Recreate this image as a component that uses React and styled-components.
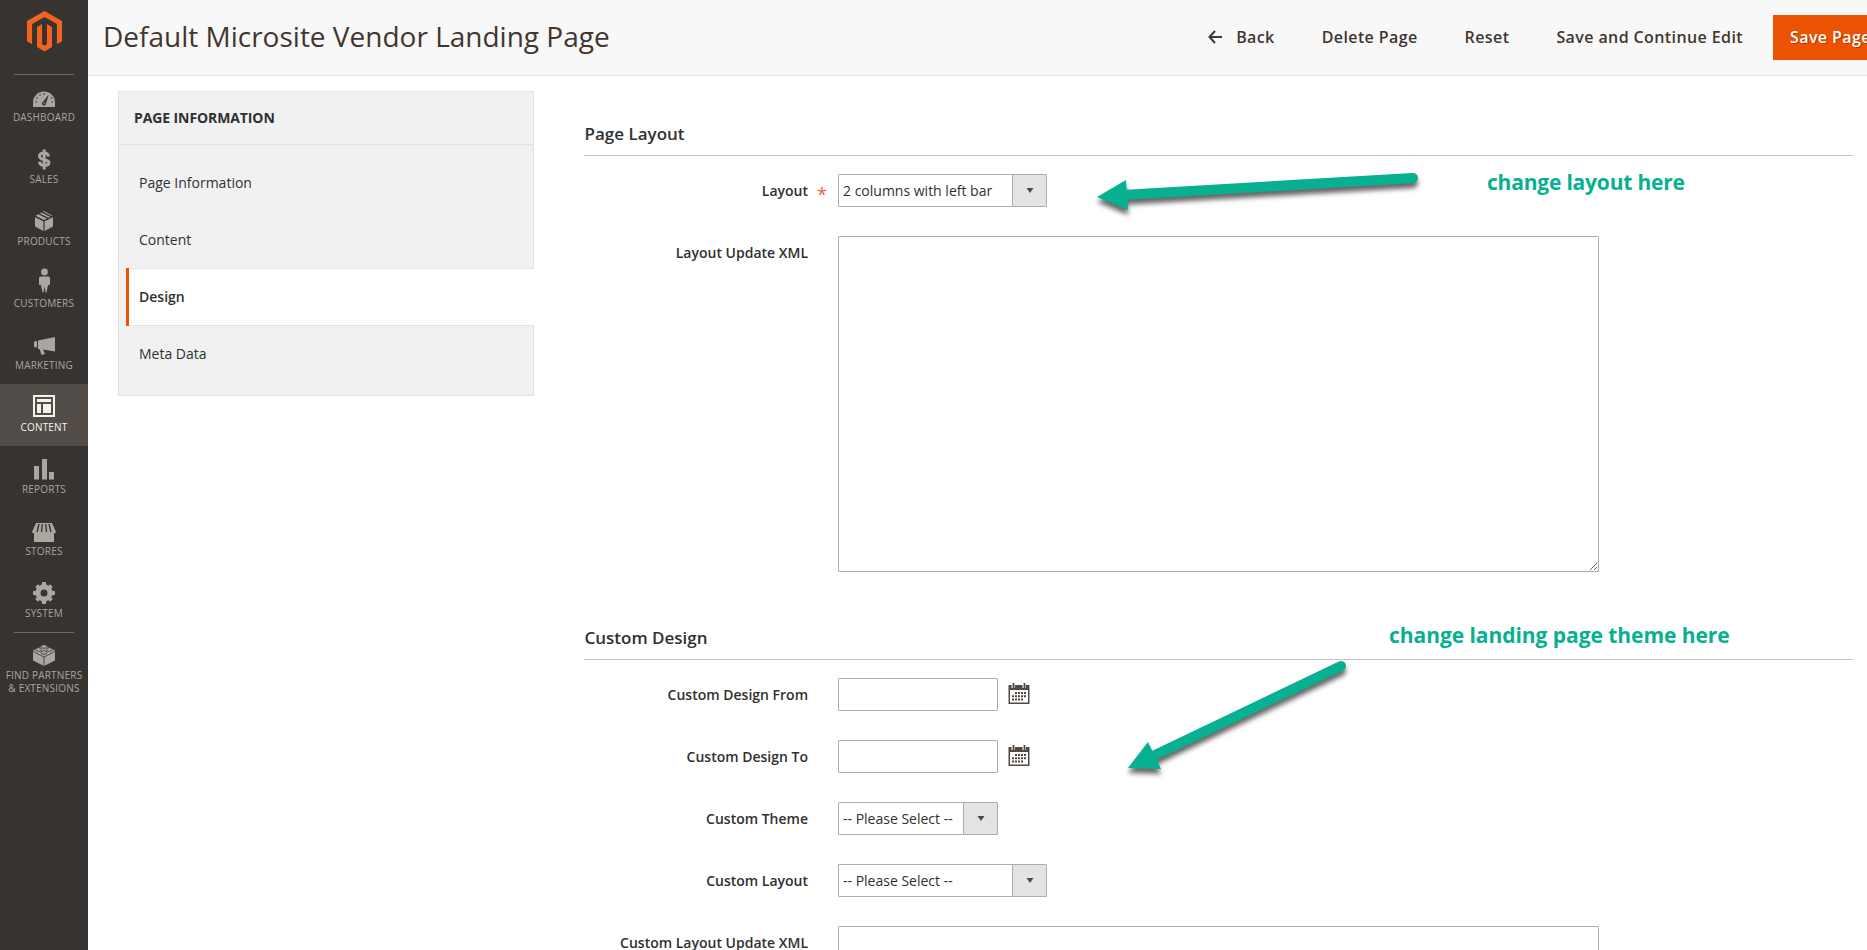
import React from 'react';
import styled, {createGlobalStyle, css} from 'styled-components';

const GlobalStyle = createGlobalStyle`
    * {
        box-sizing: border-box;
    }
    html, body {
        margin: 0;
        height: 100%;
        overflow: hidden;
    }
    body {
        background: #fff;
        color: #303030;
        font-family: 'Open Sans', 'Noto Sans', sans-serif;
        font-size: 14px;
        line-height: 19px;
    }
`

const Page = styled.div`
    position: relative;
    display: flex;
    width: 100%;
    height: 950px;
    overflow: hidden;
`

/* ---- left menu ---- */
const Sider = styled.nav`
    flex: 0 0 88px;
    background: #373330;
`

const Logo = styled.a`
    display: flex;
    justify-content: center;
    height: 74px;
    padding: 11px 0 0 1px;
`

const MenuItem = styled.a`
    display: flex;
    flex-direction: column;
    align-items: center;
    height: ${props => props.$tall ? 78 : 62}px;
    color: ${props => props.$active ? '#f7f3eb' : '#aaa6a0'};
    background: ${props => props.$active ? '#524d49' : 'transparent'};
    font-size: 10px;
    letter-spacing: .2px;
    line-height: 13px;
    text-align: center;
    text-transform: uppercase;
    white-space: nowrap;
    ${props => props.$line && css`
        &::before {
            content: '';
            width: 60px;
            height: 1px;
            margin-bottom: -1px;
            background: #736963;
        }
    `}
    svg {
        flex: none;
        margin: 10px 0 3px;
    }
`

/* ---- header ---- */
const Main = styled.div`
    flex: 1;
    min-width: 0;
`

const Header = styled.header`
    display: flex;
    align-items: center;
    height: 76px;
    padding-left: 15px;
    border-bottom: 1px solid #e3e3e3;
    background: #f8f8f8;
    overflow: hidden;
`

const Title = styled.h1`
    flex: 1;
    margin: 0;
    padding-bottom: 4px;
    color: #41362f;
    font-size: 28px;
    font-weight: 400;
    line-height: 38px;
    white-space: nowrap;
`

const Actions = styled.div`
    display: flex;
    align-items: center;
    height: 45px;
    margin-right: -13px;
`

const ActionButton = styled.button`
    display: flex;
    align-items: center;
    height: 45px;
    margin: 0;
    padding: 0 0 2px;
    margin-right: ${props => props.$gap || 47}px;
    border: 0;
    background: none;
    color: #41362f;
    font-family: inherit;
    font-size: 16px;
    font-weight: 600;
    letter-spacing: 0.4px;
    white-space: nowrap;
    svg {
        margin-right: 14px;
    }
`

const PrimaryButton = styled(ActionButton)`
    width: 107px;
    margin-right: 0;
    padding-left: 17px;
    background: #eb5202;
    color: #fff;
    text-shadow: 1px 1px 0 rgba(0, 0, 0, .25);
`

const Body = styled.div`
    display: flex;
    align-items: flex-start;
    padding: 15px 14px 0 30px;
`

/* ---- tabs ---- */
const Tabs = styled.aside`
    flex: 0 0 416px;
    height: 305px;
    border: 1px solid #e3e3e3;
    background: #f1f1f1;
`

const TabsTitle = styled.div`
    height: 53px;
    padding: 17px 15px;
    border-bottom: 1px solid #e3e3e3;
    font-weight: 700;
    letter-spacing: -.1px;
    line-height: 18px;
    text-transform: uppercase;
`

const TabList = styled.ul`
    margin: 0;
    padding: 10px 0 0 7px;
    list-style: none;
`

const Tab = styled.li`
    position: relative;
    height: 57px;
    padding: 18px 13px;
    ${props => props.$active && css`
        height: 58px;
        margin: -1px -1px 0 0;
        border: solid #e3e3e3;
        border-width: 1px 0;
        background: #fff;
        font-weight: 600;
        &::before {
            content: '';
            position: absolute;
            left: 0;
            top: -1px;
            bottom: -1px;
            width: 3px;
            background: #eb5202;
        }
    `}
`

/* ---- form ---- */
const Form = styled.form`
    flex: 1;
    margin-left: 50px;
`

const Section = styled.section`
    height: 504px;
`

const SectionTitle = styled.h2`
    height: 65px;
    margin: 0 0 18px;
    padding: 31px 0 0 .5px;
    border-bottom: 1px solid #cac3b9;
    font-size: 17px;
    font-weight: 600;
    line-height: 24px;
`

const Field = styled.div`
    display: flex;
    align-items: flex-start;
    min-height: 33px;
    margin-bottom: 29px;
`

const Label = styled.label`
    width: 224px;
    padding-top: 7px;
    font-weight: 600;
    text-align: right;
`

const Mark = styled.span`
    width: 30px;
    height: 30px;
    padding: 11px 0 0 9px;
    color: #eb5e3b;
    font-size: 18px;
`

const Control = styled.div`
    display: flex;
    align-items: center;
    width: ${props => props.$width}px;
    height: 33px;
    border: 1px solid #adadad;
    border-radius: 1px;
    background: #fff;
    white-space: nowrap;
`

const SelectValue = styled.span`
    flex: 1;
    padding: 0 0 1px 4px;
`

const SelectArrow = styled.span`
    display: flex;
    align-items: center;
    justify-content: center;
    width: 34px;
    height: 100%;
    border-left: 1px solid #adadad;
    background: #e3e3e3;
`

const TextArea = styled.textarea`
    display: block;
    width: 761px;
    height: 336px;
    padding: 5px;
    border: 1px solid #adadad;
    border-radius: 1px;
    outline: 0;
    resize: vertical;
`

const CalendarButton = styled.span`
    display: flex;
    margin: 5px 0 0 10px;
`

/* ---- notes drawn over the page ---- */
const Overlay = styled.svg`
    position: absolute;
    left: 0;
    top: 0;
    pointer-events: none;
`

const Note = styled.div`
    position: absolute;
    left: ${props => props.$x}px;
    top: ${props => props.$y}px;
    color: #07b091;
    font-size: 21px;
    font-weight: 700;
    line-height: 30px;
    letter-spacing: ${props => props.$spacing || 0}px;
    white-space: nowrap;
`

const icons = {
    dashboard: (
        <>
            <path d="M0 22V17.500a11 11 0 0 1 22 0V22z" fill="currentColor"/>
            <g fill="#373330">
                <circle cx="3" cy="17" r=".8"/><circle cx="4" cy="13" r=".8"/><circle cx="7" cy="10" r=".8"/>
                <circle cx="11" cy="9" r=".8"/><circle cx="18.500" cy="13" r=".8"/><circle cx="19.300" cy="17" r=".8"/>
                <path d="M15.800 9.500 13 18.500a2 2 0 1 1-3-1.800z"/>
            </g>
            <circle cx="11.300" cy="18" r=".8" fill="currentColor"/>
        </>
    ),
    sales: (
        <path d="M15.600 9.500C15.200 7 13.800 6 11.200 6 8.300 6 6.500 7.200 6.500 9.300c0 4.600 9.400 2.400 9.400 6.300 0 2-1.800 2.900-4.400 2.900-3 0-4.700-1.300-5.100-3.700M11.200 2.500v20"
              fill="none" stroke="currentColor" strokeWidth="3"/>
    ),
    products: (
        <g fill="currentColor">
            <path d="m2 8.200 8.400 4V22L2 17.500zM20 8.200l-8.400 4V22l8.400-4.500z"/>
            <path d="m2.600 6.800 2.700-1.500 8.600 4.300-2.900 1.500zM6.800 4.500l1.700-1 8.800 4.400-1.900.9zM10 2.600l1.200-.6 8.200 4.700-.7.500z"/>
        </g>
    ),
    customers: (
        <g fill="currentColor" transform="translate(0 -1.500)">
            <circle cx="11.500" cy="2.500" r="3.400"/>
            <path d="M7.500 7h8q1.500 0 1.500 2v6q-1 1.500-2 0v1l-1.500 7h-1l-1-6-1 6h-1L8 16v-1q-1 1.500-2 0V9q0-2 1.500-2z"/>
        </g>
    ),
    marketing: (
        <path d="M22 4v14.500l-12-2L12 21l-3.500 1-2-6H5V7.500zM4 8v6.500l-3-.5v-5.500z" fill="currentColor"/>
    ),
    content: (
        <g fill="none" stroke="currentColor">
            <rect x="1" y="1" width="20" height="20" strokeWidth="2"/>
            <path d="M4 5.500h14" strokeWidth="3"/>
            <path d="M6 9v9" strokeWidth="4"/>
            <path d="M14 9v9" strokeWidth="8"/>
        </g>
    ),
    reports: <path d="M1 9h5v13.500H1zM9 2h5v20.500H9zM16 15h5v7.500h-5z" fill="currentColor"/>,
    stores: (
        <g fill="currentColor">
            <path d="M1 13h20v10H1z"/>
            <path d="M3 4h16l4 9q-2.400 3-4.700 0-2.400 3-4.900 0-2.400 3-4.800 0-2.400 3-4.900 0-2.400 3-4.700 0z"/>
            <path d="m6 5-2 8M9.300 5l-.8 8M12.700 5l.8 8M16 5l2 8" fill="none" stroke="#373330" strokeWidth="1.400"/>
        </g>
    ),
    system: (
        <g transform="translate(0 1)">
            <circle cx="11" cy="11" r="6" fill="none" stroke="currentColor" strokeWidth="5"/>
            <path d="m8.300 4 .9-4h3.600l.9 4zM8.300 18l.9 4h3.600l.9-4zM4 8.300l-4 .9v3.600l4 .9zM18 8.300l4 .9v3.600l-4 .9z" fill="currentColor"/>
            <path d="m3.600 3.600 3 3M15.400 15.400l3 3M3.600 18.400l3-3M15.400 6.600l3-3"
                  stroke="currentColor" strokeWidth="4"/>
        </g>
    ),
    partners: (
        <g transform="translate(0 1)">
            <path d="m11 1 11 5.500v10L11 22 0 16.500v-10z" fill="currentColor"/>
            <path d="m0 7.500 11 5.500 11-5.500M11 13v9" fill="none" stroke="#373330" strokeWidth=".8"/>
            <g fill="currentColor" stroke="#373330" strokeWidth=".8">
                <ellipse cx="11" cy="2.500" rx="3" ry="1.800"/><ellipse cx="5.500" cy="5.500" rx="3" ry="1.800"/>
                <ellipse cx="16.500" cy="5.500" rx="3" ry="1.800"/><ellipse cx="11" cy="8.500" rx="3" ry="1.800"/>
            </g>
        </g>
    ),
}

const menus = [
    {key: 'dashboard', title: 'Dashboard', line: true},
    {key: 'sales', title: 'Sales'},
    {key: 'products', title: 'Products'},
    {key: 'customers', title: 'Customers'},
    {key: 'marketing', title: 'Marketing'},
    {key: 'content', title: 'Content', active: true},
    {key: 'reports', title: 'Reports'},
    {key: 'stores', title: 'Stores'},
    {key: 'system', title: 'System'},
]

const MenuIcon = ({name}) => (
    <svg width="24" height="24" viewBox="-1 -1 24 24" overflow="visible">{icons[name]}</svg>
)

const Calendar = () => (
    <svg width="22" height="22" viewBox="0 0 22 22">
        <path d="M.5 2h21v19H.5z" fill="#514943"/>
        <path d="M2 7h18v12.500H2z" fill="#fff"/>
        <path d="M5.200 0v5M16.200 0v5" stroke="#fff" strokeWidth="3.400"/>
        <path d="M5.500 0v5M16.500 0v5" stroke="#514943" strokeWidth="1.800"/>
        <g stroke="#514943" strokeWidth="2" strokeDasharray="2 1">
            <path d="M7 10h11M4 13.300h14M4 16.600h11"/>
        </g>
    </svg>
)

const Select = ({width, value}) => (
    <Control $width={width}>
        <SelectValue>{value}</SelectValue>
        <SelectArrow>
            <svg width="8" height="5" viewBox="0 0 8 5"><path d="M.5 0h7L4 5z" fill="#514943"/></svg>
        </SelectArrow>
    </Control>
)

const FormRow = ({label, required, children}) => (
    <Field>
        <Label>{label}</Label>
        <Mark>{required && '*'}</Mark>
        {children}
    </Field>
)

class App extends React.Component {
    render() {
        return (
            <Page>
                <GlobalStyle/>
                <Sider>
                    <Logo>
                        <svg width="35" height="41" viewBox="0 0 36 42" fill="#f26322">
                            <path d="M18 0 36 10.300V31l-5.200 3V13.400L18 6 5.200 13.400V34L0 31V10.300z"/>
                            <path d="m10.300 16.300 5.200-3V34l2.500 1.500 2.500-1.500V13.300l5.200 3V37L18 41.500 10.300 37z"/>
                        </svg>
                    </Logo>
                    {menus.map(item => (
                        <MenuItem key={item.key} $active={item.active} $line={item.line}>
                            <MenuIcon name={item.key}/>
                            {item.title}
                        </MenuItem>
                    ))}
                    <MenuItem $tall $line>
                        <MenuIcon name="partners"/>
                        <span>Find Partners<br/>&amp; Extensions</span>
                    </MenuItem>
                </Sider>
                <Main>
                    <Header>
                        <Title>Default Microsite Vendor Landing Page</Title>
                        <Actions>
                            <ActionButton>
                                <svg width="14" height="14" viewBox="0 0 14 14" fill="none" stroke="#41362f" strokeWidth="2">
                                    <path d="M14 7H2M7 1 1.500 7 7 13"/>
                                </svg>
                                Back
                            </ActionButton>
                            <ActionButton>Delete Page</ActionButton>
                            <ActionButton>Reset</ActionButton>
                            <ActionButton $gap={30}>Save and Continue Edit</ActionButton>
                            <PrimaryButton>Save Page</PrimaryButton>
                        </Actions>
                    </Header>
                    <Body>
                        <Tabs>
                            <TabsTitle>Page Information</TabsTitle>
                            <TabList>
                                <Tab>Page Information</Tab>
                                <Tab>Content</Tab>
                                <Tab $active>Design</Tab>
                                <Tab>Meta Data</Tab>
                            </TabList>
                        </Tabs>
                        <Form>
                            <Section>
                                <SectionTitle>Page Layout</SectionTitle>
                                <FormRow label="Layout" required>
                                    <Select width={209} value="2 columns with left bar"/>
                                </FormRow>
                                <FormRow label="Layout Update XML"><TextArea/></FormRow>
                            </Section>
                            <Section>
                                <SectionTitle>Custom Design</SectionTitle>
                                <FormRow label="Custom Design From">
                                    <Control $width={160}/>
                                    <CalendarButton><Calendar/></CalendarButton>
                                </FormRow>
                                <FormRow label="Custom Design To">
                                    <Control $width={160}/>
                                    <CalendarButton><Calendar/></CalendarButton>
                                </FormRow>
                                <FormRow label="Custom Theme">
                                    <Select width={160} value="-- Please Select --"/>
                                </FormRow>
                                <FormRow label="Custom Layout">
                                    <Select width={209} value="-- Please Select --"/>
                                </FormRow>
                                <FormRow label="Custom Layout Update XML"><TextArea/></FormRow>
                            </Section>
                        </Form>
                    </Body>
                </Main>
                <Overlay width="1867" height="950" viewBox="0 0 1867 950">
                    <defs>
                        <filter id="shadow" x="-10%" y="-30%" width="120%" height="180%" colorInterpolationFilters="sRGB">
                            <feDropShadow dx="0" dy="5" stdDeviation="2.500" floodColor="#000" floodOpacity=".6"/>
                        </filter>
                    </defs>
                    <g fill="#07b091" stroke="#07b091" filter="url(#shadow)">
                        <path d="M1413 178 1122 195" strokeWidth="10" strokeLinecap="round"/>
                        <path d="m1097 197 29-17 2 30z" stroke="none"/>
                    </g>
                    <g fill="#07b091" stroke="#07b091" filter="url(#shadow)">
                        <path d="m1341 666-188 90" strokeWidth="10" strokeLinecap="round"/>
                        <path d="m1128 768 20-26 13 27z" stroke="none"/>
                    </g>
                </Overlay>
                <Note $x={1487} $y={167} $spacing={-0.2}>change layout here</Note>
                <Note $x={1389} $y={620} $spacing={-0.05}>change landing page theme here</Note>
            </Page>
        );
    }
}

export default App;
